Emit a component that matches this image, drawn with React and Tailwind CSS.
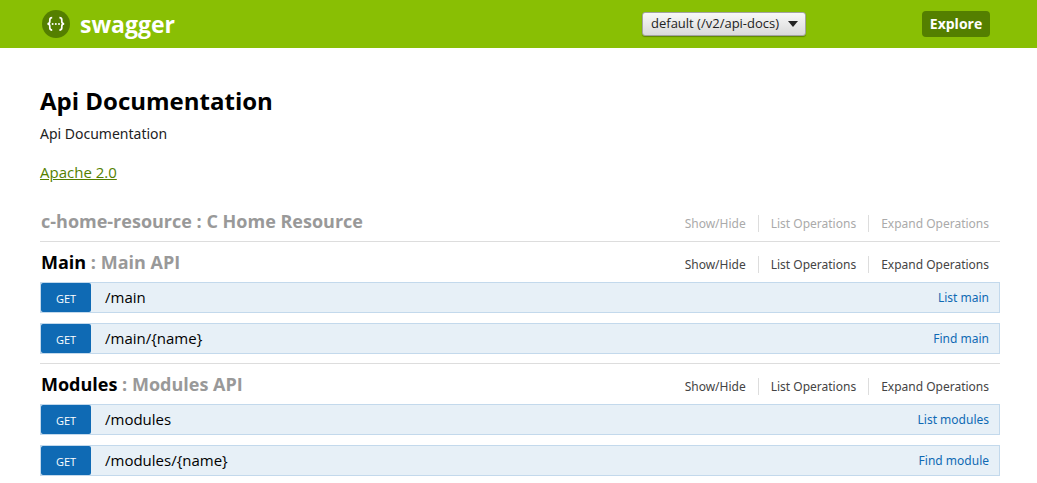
import React, { useState } from "react";

const resources = [
  {
    name: "c-home-resource",
    description: "C Home Resource",
    active: false,
    endpoints: [],
  },
  {
    name: "Main",
    description: "Main API",
    active: true,
    endpoints: [
      { method: "GET", path: "/main", summary: "List main" },
      { method: "GET", path: "/main/{name}", summary: "Find main" },
    ],
  },
  {
    name: "Modules",
    description: "Modules API",
    active: true,
    endpoints: [
      { method: "GET", path: "/modules", summary: "List modules" },
      { method: "GET", path: "/modules/{name}", summary: "Find module" },
    ],
  },
];

const optionLabels = ["Show/Hide", "List Operations", "Expand Operations"];

const Logo = () => (
  <svg width="30" height="30" viewBox="0 0 30 30" aria-hidden="true">
    <circle cx="15" cy="15" r="14" fill="#547f00" />
    <g fill="none" stroke="#fff" strokeWidth="1.7">
      <path d="M11.2 8.7C9.2 8.7 8.8 9.4 8.8 11V12.6C8.8 14.2 8.3 14.9 6.4 14.9C8.3 14.9 8.8 15.6 8.8 17.2V18.8C8.8 20.4 9.2 21.1 11.2 21.1" />
      <path d="M18.4 8.7C20.4 8.7 20.8 9.4 20.8 11V12.6C20.8 14.2 21.3 14.9 23.2 14.9C21.3 14.9 20.8 15.6 20.8 17.2V18.8C20.8 20.4 20.4 21.1 18.4 21.1" />
    </g>
    <g fill="#fff">
      <circle cx="11.6" cy="15" r="1" />
      <circle cx="14.8" cy="15" r="1" />
      <circle cx="18" cy="15" r="1" />
    </g>
  </svg>
);

const Header = () => {
  const [spec, setSpec] = useState("default");

  return (
    <header className="bg-[#89bf04] h-12 pl-[41px] pr-[47px] flex items-center">
      <a href="#top" className="flex items-center gap-[9px] text-white text-[23px] leading-8 font-bold">
        <Logo />
        swagger
      </a>

      <form className="ml-auto flex items-center gap-[116px]">
        <div className="relative">
          <select
            aria-label="API specification"
            value={spec}
            onChange={(e) => setSpec(e.target.value)}
            className="appearance-none block h-6 w-[164px] pl-2 pr-6 text-[13px] text-[#222] rounded-[3px] border border-[#a3a3a3] bg-linear-to-b from-[#f8f8f8] to-[#dadada] shadow-[0_1px_1px_rgba(0,0,0,0.3)]"
          >
            <option value="default">default (/v2/api-docs)</option>
          </select>
          <svg
            className="absolute right-2 top-[9px] pointer-events-none"
            width="10"
            height="6"
            viewBox="0 0 10 6"
          >
            <path d="M0 0H10L5 6Z" fill="#222" />
          </svg>
        </div>

        <button
          type="button"
          className="bg-[#547f00] text-white text-sm font-bold rounded w-[68px] h-[26px]"
        >
          Explore
        </button>
      </form>
    </header>
  );
};

const Endpoint = ({ method, path, summary }) => (
  <li className="flex items-center h-[31px] mb-[10px] last:mb-[9px] bg-[#e7f0f7] border border-[#c3d9ec]">
    <a
      href={`#${path}`}
      className="w-[50px] h-full shrink-0 flex items-center justify-center pt-[3px] rounded-xs bg-[#0f6ab4] text-white text-[11px]"
    >
      {method}
    </a>
    <a href={`#${path}`} className="pl-[14px] text-[15px] text-black">
      {path}
    </a>
    <a
      href={`#${path}`}
      className="ml-auto pr-[10px] font-['Noto_Sans',sans-serif] text-xs text-[#0f6ab4]"
    >
      {summary}
    </a>
  </li>
);

const Resource = ({ name, description, active, endpoints }) => (
  <li className="border-b border-[#dddddd] last:border-b-0">
    <div className="flex items-center h-10">
      <h2 className="pl-px pb-px text-lg font-bold text-[#999]">
        <a href={`#${name}`} className={active ? "text-black" : "text-[#999]"}>
          {name}
        </a>{" "}
        : {description}
      </h2>

      <ul
        className={`ml-auto mt-[5px] flex font-['Noto_Sans',sans-serif] text-xs leading-[17px] ${
          active ? "text-[#444]" : "text-[#aaa]"
        }`}
      >
        {optionLabels.map((label) => (
          <li
            key={label}
            className="px-3 last:pr-[11px] border-r border-[#ddd] last:border-r-0"
          >
            <a href={`#${name}`}>{label}</a>
          </li>
        ))}
      </ul>
    </div>

    {endpoints.length > 0 && (
      <ul>
        {endpoints.map((endpoint) => (
          <Endpoint key={endpoint.path} {...endpoint} />
        ))}
      </ul>
    )}
  </li>
);

const App = () => (
  <div
    id="top"
    className="min-h-screen bg-white font-['Open_Sans','Noto_Sans',sans-serif]"
  >
    <Header />

    <main className="pl-10 pr-[37px] pt-[35px]">
      <h1 className="text-2xl leading-9 font-bold text-black">Api Documentation</h1>
      <p className="mt-[5px] font-['Noto_Sans',sans-serif] text-sm text-[#222]">
        Api Documentation
      </p>
      <p className="mt-4 text-[15px] leading-6 text-[#547f00]">
        <a href="#license" className="underline">
          Apache 2.0
        </a>
      </p>

      <ul className="mt-[17px]">
        {resources.map((resource) => (
          <Resource key={resource.name} {...resource} />
        ))}
      </ul>
    </main>
  </div>
);

export default App;
